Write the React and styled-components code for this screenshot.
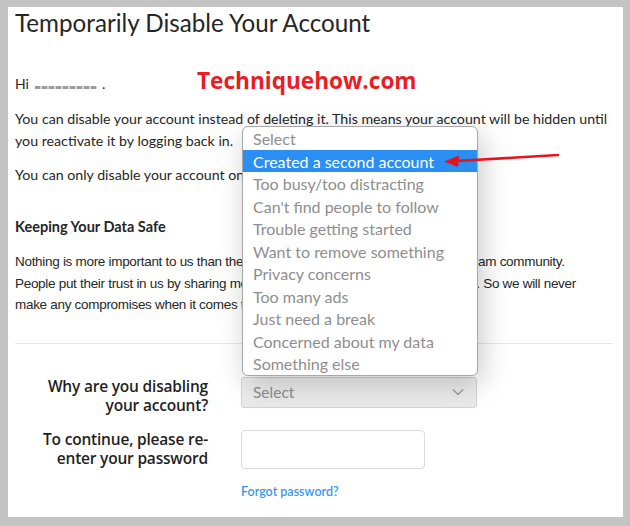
import React from 'react';
import styled, { createGlobalStyle } from 'styled-components';

const GlobalStyle = createGlobalStyle`
  html, body {
    margin: 0;
    padding: 0;
    background: #c3c3c3;
  }
  body {
    font-family: Lato, "Open Sans", sans-serif;
    color: #262626;
  }
`;

const reasons = [
  'Select',
  'Created a second account',
  'Too busy/too distracting',
  "Can't find people to follow",
  'Trouble getting started',
  'Want to remove something',
  'Privacy concerns',
  'Too many ads',
  'Just need a break',
  'Concerned about my data',
  'Something else',
];

export default function App() {
  return (
    <>
      <GlobalStyle />
      <Frame>
        <Card>
          <Title>Temporarily Disable Your Account</Title>
          <Watermark>Techniquehow.com</Watermark>

          <Greeting>
            Hi <Blurred /> .
          </Greeting>

          <Text $top={13}>
            You can disable your account instead of deleting it. This means your account will be hidden until
            <br />
            you reactivate it by logging back in.
          </Text>
          <Text $top={12}>You can only disable your account once a week.</Text>

          <Heading>Keeping Your Data Safe</Heading>
          <Plain>
            Nothing is more important to us than the safety, privacy and security of the Instagram community.
            <br />
            People put their trust in us by sharing moments of their lives with us on Instagram. So we will never
            <br />
            make any compromises when it comes to safeguarding your data.
          </Plain>

          <Rule />

          <Form>
            <Label>
              Why are you disabling
              <br />
              your account?
            </Label>
            <SelectWrap>
              <Menu>
                {reasons.map((r, i) => (
                  <Option key={r} $active={i === 1}>
                    {r}
                  </Option>
                ))}
                <Arrow width="120" height="20" viewBox="0 0 120 20">
                  <path d="M14 13 L116 7" stroke="#e8141c" strokeWidth="2.6" fill="none" strokeLinecap="round" />
                  <path d="M2 13.5 L17 7.5 L16 19 Z" fill="#e8141c" />
                </Arrow>
              </Menu>
              <SelectBox>
                <span>Select</span>
                <svg width="12" height="8" viewBox="0 0 12 8">
                  <path d="M1 1.5 L6 6.5 L11 1.5" stroke="#9a9a9a" strokeWidth="1.3" fill="none" />
                </svg>
              </SelectBox>
            </SelectWrap>

            <Label $top={14}>
              To continue, please re-
              <br />
              enter your password
            </Label>
            <Input $top={14} type="password" />

            <span />
            <Forgot href="#">Forgot password?</Forgot>
          </Form>
        </Card>
      </Frame>
    </>
  );
}

const Frame = styled.div`
  width: 630px;
  height: 526px;
  box-sizing: border-box;
  padding: 7px 7px 9px 8px;
  background: #c3c3c3;
`;

const Card = styled.div`
  position: relative;
  height: 100%;
  box-sizing: border-box;
  background: #fff;
  padding: 0 10px 0 7px;
`;

const Title = styled.h1`
  margin: 0;
  font-size: 24.2px;
  line-height: 32px;
  font-weight: 400;
  color: #262626;
`;

const Watermark = styled.div`
  position: absolute;
  left: 189px;
  top: 58px;
  font-family: "Open Sans", sans-serif;
  font-weight: 700;
  font-size: 22.6px;
  color: #ec1c24;
`;

const Greeting = styled.p`
  margin: 34px 0 0;
  font-size: 14px;
  line-height: 22px;
`;

const Blurred = styled.span`
  display: inline-block;
  width: 62px;
  height: 3px;
  margin: 0 2px;
  vertical-align: 0px;
  background: repeating-linear-gradient(90deg, #9c9c9c 0 5px, #d8d8d8 5px 7px);
  filter: blur(0.4px);
`;

const Text = styled.p`
  margin: ${(p) => p.$top}px 0 0;
  font-size: 14.2px;
  line-height: 22px;
`;

const Heading = styled.h3`
  margin: 30px 0 0;
  font-size: 14.5px;
  line-height: 22px;
  font-weight: 700;
`;

const Plain = styled.p`
  margin: 13px 0 0;
  font-family: "Liberation Sans", Arial, sans-serif;
  font-size: 13.5px;
  line-height: 21.5px;
  letter-spacing: -0.3px;
`;

const Rule = styled.hr`
  margin: 27px 0 0;
  border: 0;
  border-top: 1px solid #e6e6e6;
`;

const Form = styled.div`
  display: grid;
  grid-template-columns: 193px 236px;
  column-gap: 33px;
  margin-top: 33px;
  align-items: start;
`;

const Label = styled.div`
  margin-top: ${(p) => p.$top || 0}px;
  text-align: right;
  font-family: "Open Sans", sans-serif;
  font-size: 15.5px;
  line-height: 19.5px;
  font-weight: 600;
  letter-spacing: -0.2px;
  color: #1f1f1f;
`;

const SelectWrap = styled.div`
  position: relative;
`;

const SelectBox = styled.div`
  height: 31px;
  box-sizing: border-box;
  display: flex;
  align-items: center;
  justify-content: space-between;
  padding: 0 12px 0 11px;
  border: 1px solid #d3d3d3;
  border-radius: 3px;
  background: linear-gradient(#f0f0f0, #e9e9e9);
  font-size: 15.5px;
  color: #8e8e8e;
`;

const Menu = styled.div`
  position: absolute;
  left: 1px;
  bottom: calc(100% + 1px);
  width: 236px;
  box-sizing: border-box;
  border: 1px solid #a8a8a8;
  border-radius: 6px;
  background: #fff;
  box-shadow: 4px 8px 28px rgba(0, 0, 0, 0.22);
  z-index: 2;
`;

const Option = styled.div`
  height: 22.5px;
  line-height: 23.5px;
  padding-left: 10px;
  font-size: 16px;
  white-space: nowrap;
  color: ${(p) => (p.$active ? '#fff' : '#8e8e8e')};
  background: ${(p) => (p.$active ? '#2a8ef2' : 'transparent')};
`;

const Arrow = styled.svg`
  position: absolute;
  left: 199px;
  top: 21px;
  overflow: visible;
`;

const Input = styled.input`
  margin-top: ${(p) => p.$top}px;
  width: 184px;
  height: 39px;
  box-sizing: border-box;
  border: 1px solid #dbdbdb;
  border-radius: 4px;
  background: #fff;
`;

const Forgot = styled.a`
  margin-top: 15px;
  font-size: 12.5px;
  font-weight: 600;
  color: #3897f0;
  text-decoration: none;
`;
